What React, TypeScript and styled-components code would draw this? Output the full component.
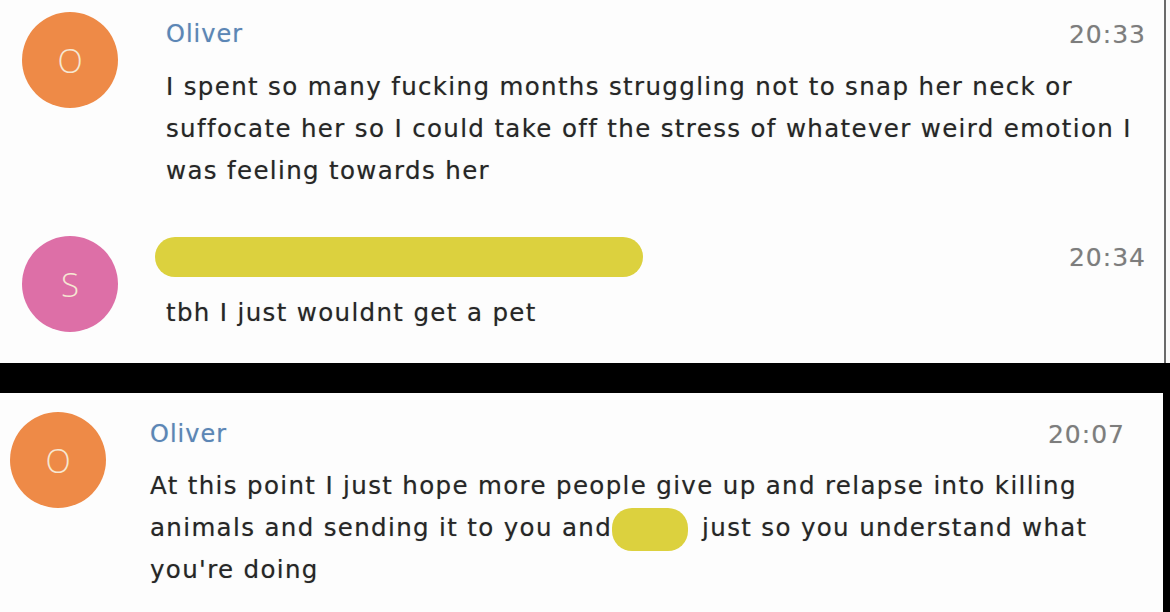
import React from "react";
import styled, { createGlobalStyle } from "styled-components";

const Global = createGlobalStyle`
  html, body { margin: 0; padding: 0; background: #000; }
  body { font-family: "DejaVu Sans", "Open Sans", sans-serif; }
`;

const Page = styled.div`
  width: 1170px;
  height: 612px;
  background: #000;
  display: flex;
  flex-direction: column;
  gap: 30px;
  overflow: hidden;
`;

const Panel = styled.div<{ $h: number; $right: number; $pl: number; $pr: number; $pt: number; $edge?: boolean }>`
  background: #fdfdfd;
  height: ${(p) => p.$h}px;
  margin-right: ${(p) => p.$right}px;
  padding: ${(p) => p.$pt}px ${(p) => p.$pr}px 0 ${(p) => p.$pl}px;
  box-sizing: border-box;
  display: flex;
  flex-direction: column;
  box-shadow: ${(p) => (p.$edge ? "inset -4px 0 0 #fafafa, inset -6px 0 0 #6a6a6a" : "none")};
`;

const Row = styled.div<{ $gap: number; $mt?: number }>`
  display: flex;
  align-items: flex-start;
  gap: ${(p) => p.$gap}px;
  margin-top: ${(p) => p.$mt ?? 0}px;
`;

const Avatar = styled.div<{ $bg: string }>`
  width: 96px;
  height: 96px;
  border-radius: 50%;
  background: ${(p) => p.$bg};
  color: #f6e7d2;
  display: flex;
  align-items: center;
  justify-content: center;
  font-family: "Open Sans", "DejaVu Sans", sans-serif;
  font-size: 33px;
  font-weight: 300;
  flex-shrink: 0;
`;

const Body = styled.div`
  flex: 1;
  display: flex;
  flex-direction: column;
`;

const Header = styled.div<{ $h: number }>`
  display: flex;
  justify-content: space-between;
  align-items: center;
  height: ${(p) => p.$h}px;
`;

const Name = styled.span`
  color: #5b86b6;
  font-size: 24px;
  letter-spacing: 1px;
  text-shadow: 0 0 1px rgba(60, 100, 150, 0.35);
`;

const Time = styled.span`
  color: #7d7d7d;
  font-size: 25px;
  letter-spacing: 1px;
  text-shadow: 0 0 1px rgba(0, 0, 0, 0.2);
`;

const Text = styled.div<{ $mt: number }>`
  color: #262626;
  font-size: 24.5px;
  letter-spacing: 1.35px;
  line-height: 42px;
  margin-top: ${(p) => p.$mt}px;
  white-space: nowrap;
  text-shadow: 0 0 1px rgba(0, 0, 0, 0.35);
`;

const Redact = styled.div`
  width: 488px;
  height: 40px;
  border-radius: 20px;
  background: #dcd13e;
  margin-left: -11px;
`;

const InlineRedact = styled.span`
  display: inline-block;
  width: 76px;
  height: 43px;
  margin: -4px 14px -4px 0;
  border-radius: 20px;
  background: #dcd13e;
  vertical-align: middle;
`;

export default function App() {
  return (
    <>
      <Global />
      <Page>
        <Panel $h={363} $right={0} $pl={22} $pr={24} $pt={12} $edge>
          <Row $gap={48}>
            <Avatar $bg="#ee8a47">O</Avatar>
            <Body>
              <Header $h={44}>
                <Name>Oliver</Name>
                <Time>20:33</Time>
              </Header>
              <Text $mt={10}>
                I spent so many fucking months struggling not to snap her neck or
                <br />
                suffocate her so I could take off the stress of whatever weird emotion I
                <br />
                was feeling towards her
              </Text>
            </Body>
          </Row>
          <Row $gap={48} $mt={44}>
            <Avatar $bg="#dd6fa7">S</Avatar>
            <Body>
              <Header $h={42}>
                <Redact />
                <Time>20:34</Time>
              </Header>
              <Text $mt={14}>tbh I just wouldnt get a pet</Text>
            </Body>
          </Row>
        </Panel>
        <Panel $h={219} $right={7} $pl={10} $pr={38} $pt={19}>
          <Row $gap={44}>
            <Avatar $bg="#ee8a47">O</Avatar>
            <Body>
              <Header $h={44}>
                <Name>Oliver</Name>
                <Time>20:07</Time>
              </Header>
              <Text $mt={9}>
                At this point I just hope more people give up and relapse into killing
                <br />
                animals and sending it to you and<InlineRedact />just so you understand what
                <br />
                you're doing
              </Text>
            </Body>
          </Row>
        </Panel>
      </Page>
    </>
  );
}
